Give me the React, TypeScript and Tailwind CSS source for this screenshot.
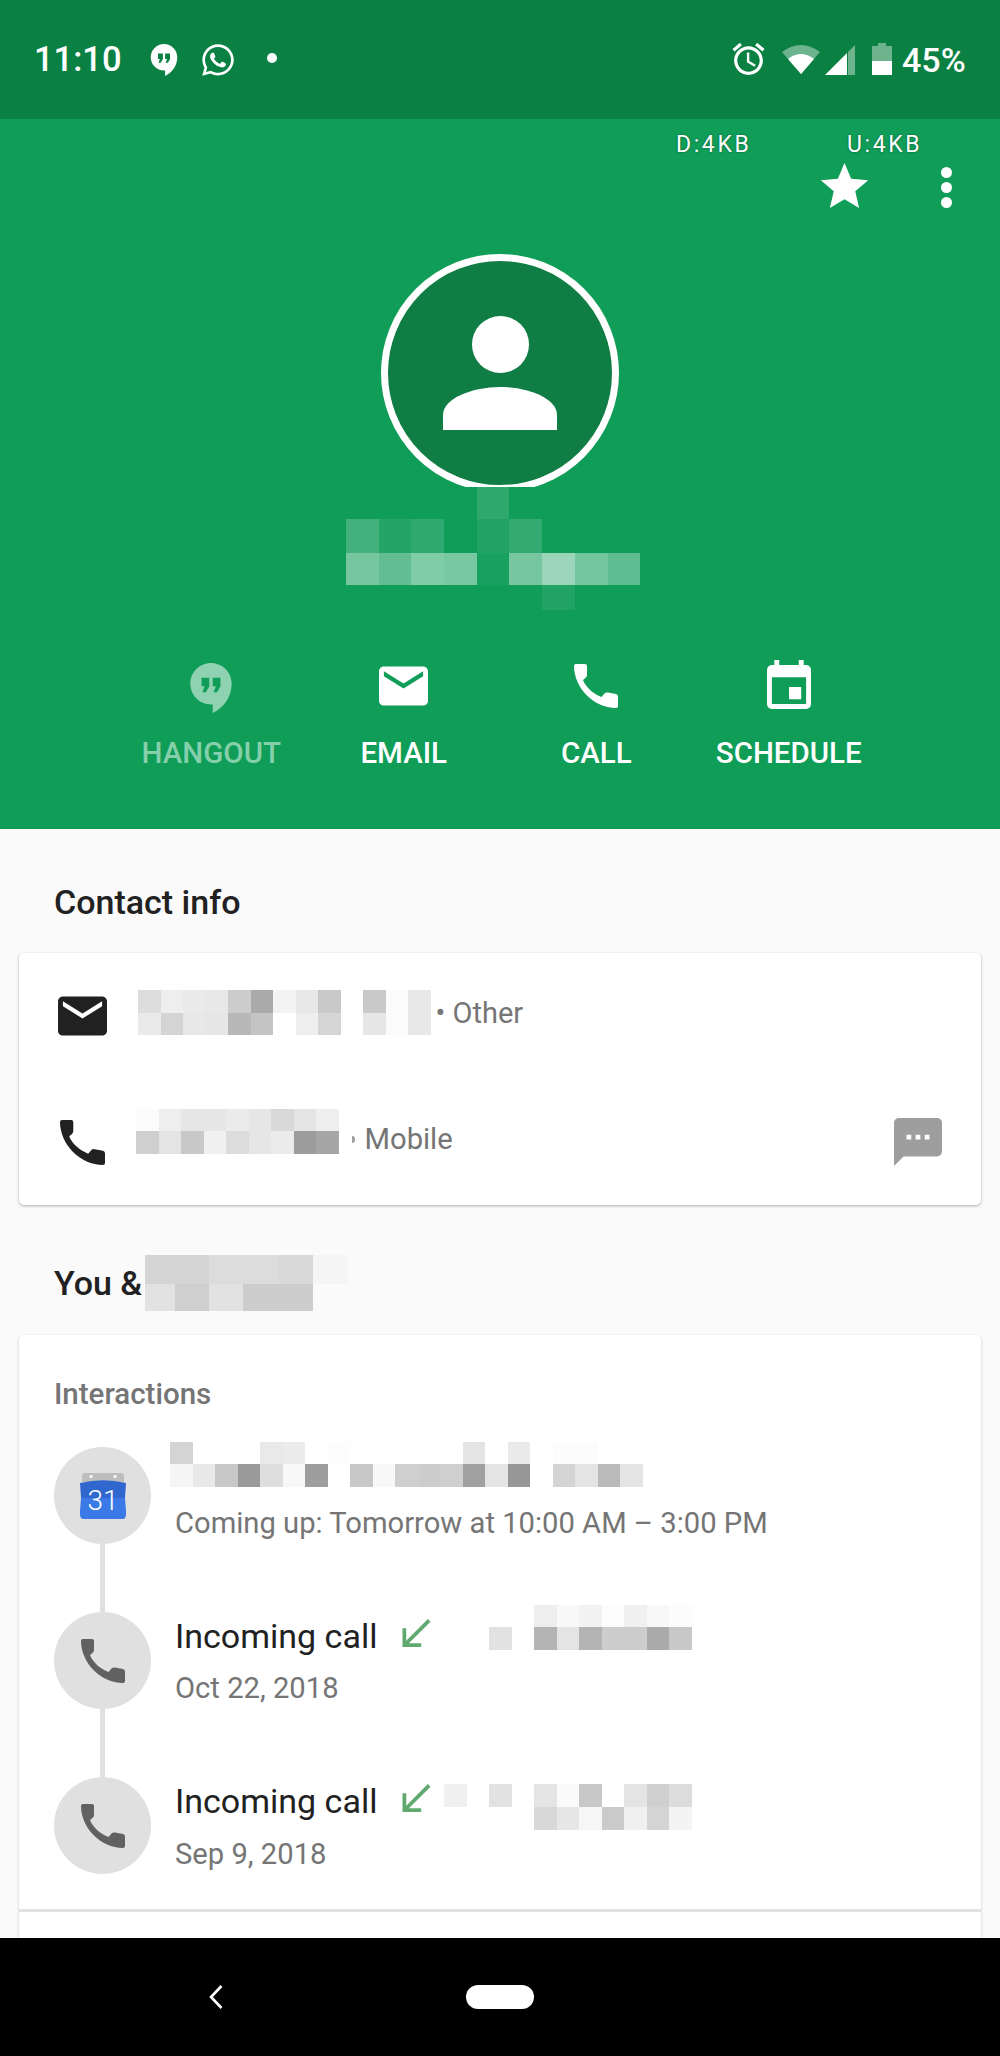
import React from "react";
import { FaWhatsapp } from "react-icons/fa";

type Cell = string | null;

function Mosaic({ rows, cell, rowH, widths }: { rows: Cell[][]; cell?: number; rowH: number | number[]; widths?: number[] }) {
  return (
    <div className="flex flex-col shrink-0">
      {rows.map((r, i) => (
        <div key={i} className="flex" style={{ height: Array.isArray(rowH) ? rowH[i] : rowH }}>
          {r.map((c, j) => (
            <div key={j} style={{ width: widths ? widths[j] : cell, backgroundColor: c ?? "transparent" }} />
          ))}
        </div>
      ))}
    </div>
  );
}

const PHONE =
  "M2 0H11Q13 0 13 2V10.5Q13 12.5 11.5 14L9 16C12 24 20 30 27.5 33L30.5 29.5Q32 28 34 28.5L42 30Q44 30.5 44 32.5V42Q44 44 42 44C20 44 0 24 0 2Q0 0 2 0Z";
const MAIL =
  "M20 4H4c-1.1 0-1.99.9-1.99 2L2 18c0 1.1.9 2 2 2h16c1.1 0 2-.9 2-2V6c0-1.1-.9-2-2-2zm0 4l-8 5-8-5V6l8 5 8-5v2z";

function PhoneIcon({ className }: { className: string }) {
  return (
    <svg viewBox="0 0 44 44" className={className} fill="currentColor">
      <path d={PHONE} />
    </svg>
  );
}
function MailIcon({ className }: { className: string }) {
  return (
    <svg viewBox="2 4 20 16" className={className} fill="currentColor">
      <path d={MAIL} />
    </svg>
  );
}
function HangoutIcon({ className }: { className: string }) {
  return (
    <svg viewBox="0 0 24 29" className={className} fill="currentColor">
      <path
        fillRule="evenodd"
        d="M12 0C5.4 0 0 5.4 0 12c0 6.6 5.4 12 12 12h1v5c6-3 11-9 11-17C24 5.4 18.6 0 12 0zM6.5 8.5H11v5l-2 3.5H7l1.3-3.5H6.5zM13 8.5h4.5v5l-2 3.5h-2l1.3-3.5H13z"
      />
    </svg>
  );
}
function Arrow() {
  return (
    <svg viewBox="5 4 15 15" className="w-[29px] h-[28px] text-[#5fa96f] shrink-0 mt-[7px] ml-[25px]" fill="currentColor">
      <path d="M20 5.41L18.59 4 7 15.59V9H5v10h10v-2H8.41z" />
    </svg>
  );
}

function Action({ label, dim, children }: { label: string; dim?: boolean; children: React.ReactNode }) {
  return (
    <div className="flex flex-col items-center">
      <div className={"h-[50px] flex items-center justify-center " + (dim ? "text-[#8fd2b1]" : "text-white")}>{children}</div>
      <div className={"mt-[24px] h-[36px] leading-[36px] text-[29.5px] font-medium whitespace-nowrap " + (dim ? "text-[#86cfab]" : "text-white")}>
        {label}
      </div>
    </div>
  );
}

function Circle({ children }: { children: React.ReactNode }) {
  return <div className="w-[97px] h-[97px] rounded-full bg-[#e0e0e0] flex items-center justify-center shrink-0">{children}</div>;
}

const callMosaic1: Cell[][] = [
  [null, null, null, null, "#eeeeee", "#f8f8f8", "#f2f2f2", "#fdfdfd", "#f0f0f0", "#f8f8f8", "#fcfcfc"],
  [null, null, "#e2e2e2", null, "#b4b4b4", "#e4e4e4", "#b4b4b4", "#cdcdcd", "#cdcdcd", "#ababab", "#c8c8c8"],
];
const callMosaic2: Cell[][] = [
  ["#f0f0f0", null, "#e2e2e2", null, "#e4e4e4", "#fafafa", "#c8c8c8", "#ffffff", "#e4e4e4", "#cfcfcf", "#dcdcdc"],
  [null, null, null, null, "#d8d8d8", "#e6e6e6", "#f6f6f6", "#cacaca", "#f0f0f0", "#d4d4d4", "#f4f4f4"],
];

export default function App() {
  return (
    <div className="w-[1000px] h-[2056px] overflow-hidden flex flex-col bg-[#fafafa] font-['Roboto',sans-serif]">
      {/* status bar */}
      <div className="h-[119px] bg-[#0b8043] flex items-center text-white shrink-0">
        <div className="ml-[34px] text-[34.5px] font-medium leading-none w-[86px] whitespace-nowrap">11:10</div>
        <HangoutIcon className="ml-[30px] w-[28px] h-[32px]" />
        <FaWhatsapp className="ml-[22px] w-[36px] h-[36px]" />
        <div className="ml-[31px] w-[10px] h-[10px] rounded-full bg-white -mt-[3px]" />
        <svg viewBox="2 2 20 20" className="ml-[455px] w-[33px] h-[32px] -mt-[1px]" fill="currentColor">
          <path d="M22 5.72l-4.6-3.86-1.29 1.53 4.6 3.86L22 5.72zM7.88 3.39L6.6 1.86 2 5.71l1.29 1.53 4.59-3.85zM12.5 8H11v6l4.75 2.85.75-1.23-4-2.37V8zM12 4c-4.97 0-9 4.03-9 9s4.02 9 9 9c4.97 0 9-4.03 9-9s-4.03-9-9-9zm0 16c-3.87 0-7-3.13-7-7s3.13-7 7-7 7 3.13 7 7-3.13 7-7 7z" />
        </svg>
        <svg viewBox="0 0 38 29" className="ml-[17px] w-[38px] h-[29px] -mt-[1px]" fill="currentColor">
          <path d="M19 29L0 7Q19 -7 38 7Z" opacity="0.4" />
          <path d="M19 29L6 14Q19 4 32 14Z" />
        </svg>
        <svg viewBox="0 0 30 30" className="ml-[5px] w-[30px] h-[30px]" fill="currentColor">
          <path d="M0 30L22 8V30Z" />
          <path d="M23 7L30 0V30H23Z" opacity="0.4" />
        </svg>
        <svg viewBox="0 0 20 32" className="ml-[17px] w-[20px] h-[32px] -mt-[1px]" fill="currentColor">
          <path d="M6 0H14V3H20V18H0V3H6Z" opacity="0.4" />
          <path d="M0 18H20V32H0Z" />
        </svg>
        <div className="ml-[10px] text-[34px] font-medium leading-none whitespace-nowrap">45%</div>
      </div>

      {/* header */}
      <div className="h-[710px] bg-[#0f9d58] shrink-0 flex flex-col">
        <div className="h-[44px] pt-[6px] pl-[676px] flex items-center text-white text-[23px] tracking-[2.6px] [text-shadow:0_0_2px_#00000080] leading-none">
          <span className="w-[171px] whitespace-nowrap">D:4KB</span>
          <span className="whitespace-nowrap">U:4KB</span>
        </div>
        <div className="h-[45px] pl-[820px] flex items-start text-white">
          <svg viewBox="2 2 20 19" className="w-[49px] h-[45px]" fill="currentColor">
            <path d="M12 17.27L18.18 21l-1.64-7.03L22 9.24l-7.19-.61L12 2 9.19 8.63 2 9.24l5.46 4.73L5.82 21z" />
          </svg>
          <div className="ml-[72px] mt-[4px] flex flex-col gap-[4.5px]">
            <div className="w-[10.5px] h-[10.5px] rounded-full bg-white" />
            <div className="w-[10.5px] h-[10.5px] rounded-full bg-white" />
            <div className="w-[10.5px] h-[10.5px] rounded-full bg-white" />
          </div>
        </div>
        <div className="mt-[46px] flex justify-center">
          <div className="w-[238px] h-[233px] overflow-hidden">
            <div className="w-[238px] h-[238px] rounded-full border-[7px] border-white bg-[#0f7d44] flex flex-col items-center">
              <div className="mt-[55px] w-[57px] h-[57px] rounded-full bg-white" />
              <svg viewBox="0 0 114 43" className="mt-[14px] w-[114px] h-[43px]" fill="#ffffff">
                <path d="M0 43V28C0 11 30 0 57 0C84 0 114 11 114 28V43Z" />
              </svg>
            </div>
          </div>
        </div>
        <div className="ml-[346px]">
          <Mosaic
            cell={32.7}
            rowH={[32, 33.5, 32.5, 25]}
            rows={[
              [null, null, null, null, "#2ea86d", null, null, null, null],
              ["#44b07d", "#25a468", "#2fa96f", null, "#21a366", "#33aa72", null, null, null],
              ["#76c7a0", "#62be92", "#7fcca7", "#78c8a2", "#17a060", "#76c7a0", "#9cd6ba", "#74c69f", "#5fbc90"],
              [null, null, null, null, null, null, "#20a365", null, null],
            ]}
          />
        </div>
        <div className="mt-[51px] pl-[115px] grid grid-cols-[192.5px_192.5px_192.5px_192.5px]">
          <Action label="HANGOUT" dim>
            <HangoutIcon className="w-[42px] h-[50px] mt-[4px]" />
          </Action>
          <Action label="EMAIL">
            <MailIcon className="w-[49px] h-[40px]" />
          </Action>
          <Action label="CALL">
            <PhoneIcon className="w-[44px] h-[44px]" />
          </Action>
          <Action label="SCHEDULE">
            <svg viewBox="3 1 18 20" className="w-[44px] h-[49px] -mt-[3px]" fill="currentColor">
              <path d="M17 12h-5v5h5v-5zM16 1v2H8V1H6v2H5c-1.11 0-1.99.9-1.99 2L3 19c0 1.1.89 2 2 2h14c1.1 0 2-.9 2-2V5c0-1.1-.9-2-2-2h-1V1h-2zm3 18H5V8h14v11z" />
            </svg>
          </Action>
        </div>
      </div>

      {/* content */}
      <div className="flex-1 min-h-0 overflow-hidden flex flex-col">
        <div className="h-[124px] pt-[22px] pl-[54px] flex items-center text-[34px] font-medium text-[#212121] shrink-0">Contact info</div>

        <div className="mx-[19px] h-[252px] shrink-0 bg-white rounded-[5px] shadow-[0_1px_3px_rgba(0,0,0,0.3)]">
          <div className="h-[126px] flex items-center">
            <MailIcon className="ml-[39px] w-[49px] h-[40px] text-[#212121] shrink-0" />
            <div className="ml-[31px] -mt-[7px]">
              <Mosaic
                cell={22.5}
                rowH={[22.6, 22.6]}
                rows={[
                  ["#dddddd", "#eeeeee", "#eaeaea", "#e8e8e8", "#cccccc", "#aaaaaa", "#f3f3f3", "#e8e8e8", "#c9c9c9", null, "#c9c9c9", "#fbfbfb", "#e8e8e8"],
                  ["#eaeaea", "#d4d4d4", "#e8e8e8", "#e6e6e6", "#b8b8b8", "#c4c4c4", "#ffffff", "#eeeeee", "#d6d6d6", null, "#e6e6e6", "#fbfbfb", "#e8e8e8"],
                ]}
              />
            </div>
            <div className="ml-[5px] -mt-[6px] text-[29px] leading-[36px] text-[#757575] whitespace-nowrap">• Other</div>
          </div>
          <div className="h-[126px] flex items-center">
            <PhoneIcon className="ml-[41px] w-[45px] h-[45px] text-[#212121] shrink-0" />
            <div className="ml-[31px] -mt-[21px]">
              <Mosaic
                cell={22.5}
                rowH={[22.3, 22.5]}
                rows={[
                  ["#fbfbfb", "#eeeeee", "#e6e6e6", "#e6e6e6", "#ebebeb", "#e6e6e6", "#d9d9d9", "#e4e4e4", "#eeeeee"],
                  ["#cfcfcf", "#e4e4e4", "#c8c8c8", "#f0f0f0", "#dcdcdc", "#e6e6e6", "#ebebeb", "#9c9c9c", "#a6a6a6"],
                ]}
              />
            </div>
            <div className="ml-[13px] w-[3px] h-[7px] rounded-r-full bg-[#9e9e9e] -mt-[6px] shrink-0" />
            <div className="ml-[10px] -mt-[6px] text-[29.2px] leading-[36px] text-[#757575] whitespace-nowrap">Mobile</div>
            <svg viewBox="2 2 20 20" className="ml-auto mr-[39px] w-[48px] h-[48px] text-[#9e9e9e] shrink-0" fill="currentColor">
              <path
                fillRule="evenodd"
                d="M20 2H4c-1.1 0-2 .9-2 2v18l4-4h14c1.1 0 2-.9 2-2V4c0-1.1-.9-2-2-2zM7.2 9h2v2h-2zM11 9h2v2h-2zM14.8 9h2v2h-2z"
              />
            </svg>
          </div>
        </div>

        <div className="h-[130px] shrink-0 pl-[54px] flex items-start">
          <div className="mt-[58px] text-[34px] leading-[40px] font-medium text-[#212121] whitespace-nowrap">You &amp;</div>
          <div className="ml-[3px] mt-[50px]">
            <Mosaic
              widths={[29.5, 34.5, 34, 35, 35, 35]}
              rowH={[29, 27]}
              rows={[
                ["#d4d4d4", "#d4d4d4", "#dcdcdc", "#dcdcdc", "#d9d9d9", "#f5f5f5"],
                ["#e2e2e2", "#cfcfcf", "#e2e2e2", "#cdcdcd", "#cdcdcd", null],
              ]}
            />
          </div>
        </div>

        <div className="mx-[19px] flex-1 min-h-0 bg-white rounded-t-[5px] shadow-[0_1px_3px_rgba(0,0,0,0.2)] flex flex-col">
          <div className="h-[112px] pl-[35px] pt-[8px] shrink-0">
            <div className="h-[36px] mt-[33px] leading-[36px] text-[29.5px] font-medium text-[#757575]">Interactions</div>
          </div>

          {/* event */}
          <div className="flex pl-[35px] shrink-0">
            <div className="flex flex-col items-center w-[97px] shrink-0">
              <Circle>
                <svg viewBox="0 0 48 46" className="w-[48px] h-[46px]">
                  <path d="M3 9V3a3 3 0 0 1 3-3H42a3 3 0 0 1 3 3V9Z" fill="#bdbdbd" />
                  <circle cx="12" cy="3.5" r="1.5" fill="#ffffff" />
                  <circle cx="36" cy="3.5" r="1.5" fill="#ffffff" />
                  <path d="M1 10Q24 4.5 47 10L46 25H2Z" fill="#2f67cf" />
                  <path d="M2 25H46L47 38Q47.500 46 44 46H4Q.5 46 1 38Z" fill="#3b7ae6" />
                  <text x="24" y="37" textAnchor="middle" fill="#ffffff" fontSize="28" fontWeight="300" fontFamily="Roboto, sans-serif">
                    31
                  </text>
                </svg>
              </Circle>
              <div className="w-[5px] h-[68px] bg-[#e0e0e0]" />
            </div>
            <div className="ml-[19px] -mt-[5px] flex flex-col">
              <Mosaic
                cell={22.5}
                rowH={[22.3, 22.7]}
                rows={[
                  ["#d4d4d4", null, null, null, "#e9e9e9", "#ebebeb", null, "#fdfdfd", null, null, null, null, null, "#e4e4e4", null, "#eaeaea", null, "#fcfcfc", "#fcfcfc", null, null],
                  ["#f5f5f5", "#e8e8e8", "#c8c8c8", "#9a9a9a", "#dedede", "#f8f8f8", "#9e9e9e", null, "#c8c8c8", "#f8f8f8", "#cfcfcf", "#cdcdcd", "#cfcfcf", "#a0a0a0", "#e4e4e4", "#969696", null, "#d4d4d4", "#e4e4e4", "#bababa", "#e4e4e4"],
                ]}
              />
              <div className="ml-[5px] mt-[18px] leading-[36px] text-[29.2px] text-[#757575] whitespace-nowrap">Coming up: Tomorrow at 10:00 AM – 3:00 PM</div>
            </div>
          </div>

          {/* call 1 */}
          <div className="flex pl-[35px] shrink-0">
            <div className="flex flex-col items-center w-[97px] shrink-0">
              <Circle>
                <PhoneIcon className="w-[44px] h-[44px] text-[#616161]" />
              </Circle>
              <div className="w-[5px] h-[68px] bg-[#e0e0e0]" />
            </div>
            <div className="ml-[24px] flex flex-col">
              <div className="flex items-start h-[48px]">
                <div className="leading-[48px] text-[34px] text-[#212121] whitespace-nowrap">Incoming call</div>
                <Arrow />
                <div className="ml-[13px] -mt-[7px]">
                  <Mosaic cell={22.5} rowH={[22.4, 22.6]} rows={callMosaic1} />
                </div>
              </div>
              <div className="mt-[10px] leading-[36px] text-[29.2px] text-[#757575]">Oct 22, 2018</div>
            </div>
          </div>

          {/* call 2 */}
          <div className="flex pl-[35px] shrink-0">
            <div className="flex flex-col items-center w-[97px] shrink-0">
              <Circle>
                <PhoneIcon className="w-[44px] h-[44px] text-[#616161]" />
              </Circle>
            </div>
            <div className="ml-[24px] flex flex-col">
              <div className="flex items-start h-[48px]">
                <div className="leading-[48px] text-[34px] text-[#212121] whitespace-nowrap">Incoming call</div>
                <Arrow />
                <div className="ml-[13px] mt-[7px]">
                  <Mosaic cell={22.5} rowH={[22.6, 23]} rows={callMosaic2} />
                </div>
              </div>
              <div className="mt-[11px] leading-[36px] text-[29.2px] text-[#757575]">Sep 9, 2018</div>
            </div>
          </div>

          <div className="mt-[35px] h-[3px] bg-[#e0e0e0] shrink-0" />
        </div>
      </div>

      {/* nav */}
      <div className="h-[118px] bg-black shrink-0 flex items-center">
        <svg viewBox="0 0 14 24" className="ml-[209px] w-[14px] h-[24px]" fill="none" stroke="#ffffff" strokeWidth="2.6">
          <path d="M12.5 1L2 12L12.5 23" />
        </svg>
        <div className="ml-[243px] w-[68px] h-[24px] rounded-full bg-white" />
      </div>
    </div>
  );
}
